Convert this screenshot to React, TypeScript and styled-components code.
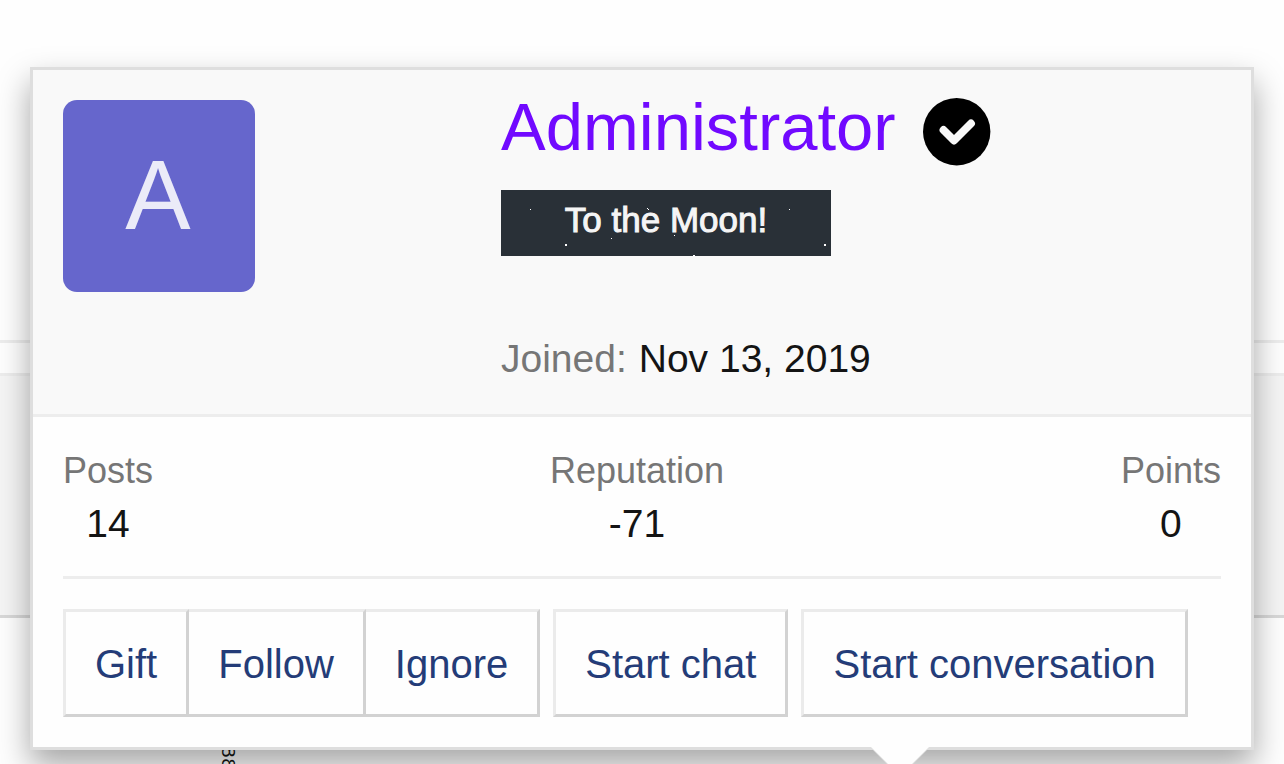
import React from "react";
import styled, { createGlobalStyle } from "styled-components";

const GlobalStyle = createGlobalStyle`
  *, *::before, *::after { box-sizing: border-box; }
  html, body { margin: 0; padding: 0; }
  body {
    font-family: "Liberation Sans", Arial, sans-serif;
    font-size: 40px;
    color: #141414;
    background: #fefefe;
  }
`;

const Page = styled.div`
  position: relative;
  height: 100vh;
  min-height: 764px;
  overflow: hidden;
`;

const ThreadIntro = styled.div`
  height: 343px;
  border-bottom: 3px solid #ededed;
`;

const ThreadPost = styled.div`
  margin-top: 30px;
  height: 245px;
  background: #f5f5f5;
  border-top: 3px solid #ededed;
  border-bottom: 3px solid #d8d8d8;
`;

const ThreadFooter = styled.div`
  padding: 128px 0 0 216px;
`;

const SideCount = styled.span`
  display: block;
  writing-mode: vertical-rl;
  font-family: "Liberation Mono", monospace;
  font-size: 20px;
  line-height: 22px;
`;

const MemberTooltip = styled.section`
  position: absolute;
  top: 67px;
  left: 30px;
  right: 30px;
  background: #fefefe;
  border: 3px solid #dedede;
  box-shadow: 0 15px 30px rgba(0, 0, 0, 0.35);
`;

const Header = styled.header`
  display: grid;
  grid-template-columns: minmax(192px, 438px) minmax(0, 1fr);
  padding: 30px;
  background: #f9f9f9;
  border-bottom: 3px solid #ededed;
`;

const Avatar = styled.a`
  display: flex;
  align-items: center;
  justify-content: center;
  width: 192px;
  height: 192px;
  padding: 0 2px 2px 0;
  border-radius: 14px;
  background: #6666cc;
  color: #ebebf8;
  font-size: 98px;
  line-height: 100px;
  text-decoration: none;
`;

const NameRow = styled.div`
  display: flex;
  align-items: flex-start;
  gap: 27px;
  height: 64px;
`;

const Name = styled.h1`
  margin: 0;
  font-size: 67px;
  line-height: 54px;
  font-weight: 400;

  a {
    color: #7109ff;
    text-decoration: none;
  }
`;

const VerifiedIcon = styled.svg`
  flex: none;
  align-self: center;
  width: 68px;
  height: 68px;
`;

const Banner = styled.div`
  position: relative;
  width: 330px;
  height: 66px;
  margin-top: 26px;
  background: #293037;
  color: #f5f5f5;
  font-size: 35px;
  line-height: 60px;
  text-align: center;
  -webkit-text-stroke: 1px #f5f5f5;
`;

const Stars = styled.svg`
  position: absolute;
  inset: 0;
`;

const Joined = styled.dl`
  display: flex;
  gap: 12px;
  margin: 78px 0 0;
  font-size: 39px;
  line-height: 50px;

  dt { color: #767676; }
  dd { margin: 0; }
`;

const Body = styled.div`
  padding: 30px;
`;

const Stats = styled.div`
  display: flex;
  justify-content: space-between;
  padding-bottom: 26px;
  border-bottom: 3px solid #ededed;
`;

const Stat = styled.dl`
  margin: 0;
  text-align: center;

  dt {
    color: #767676;
    font-size: 36px;
    line-height: 48px;
  }

  dd {
    margin: 3px 0 0;
    font-size: 39px;
    line-height: 52px;
  }
`;

const Actions = styled.div`
  display: flex;
  gap: 13px;
  margin-top: 30px;
`;

const ButtonGroup = styled.div`
  display: flex;
`;

const ActionButton = styled.button<{ $joined?: boolean }>`
  padding: 26px 29px 24px;
  border: 3px solid;
  border-color: #ebebeb #d2d2d2 #d2d2d2 #ebebeb;
  border-left-width: ${(p) => (p.$joined ? "0" : "3px")};
  border-radius: 0;
  background: #fefefe;
  color: #243c78;
  font: inherit;
  line-height: 52px;
  white-space: nowrap;
  cursor: pointer;
`;

const Pointer = styled.svg`
  position: absolute;
  top: 100%;
  left: 837px;
  width: 60px;
  height: 30px;
`;

const stars = [
  { x: 29, y: 19, size: 1 },
  { x: 146, y: 18, size: 1 },
  { x: 147, y: 19, size: 1 },
  { x: 288, y: 19, size: 1 },
  { x: 110, y: 48, size: 1 },
  { x: 173, y: 45, size: 1 },
  { x: 64, y: 54, size: 2 },
  { x: 323, y: 54, size: 2 },
  { x: 192, y: 65, size: 2 },
];

const stats = [
  { label: "Posts", value: "14" },
  { label: "Reputation", value: "-71" },
  { label: "Points", value: "0" },
];

export default function App() {
  return (
    <>
      <GlobalStyle />
      <Page>
        <ThreadIntro />
        <ThreadPost />
        <ThreadFooter>
          <SideCount>88</SideCount>
        </ThreadFooter>

        <MemberTooltip aria-label="Member">
          <Header>
            <div>
              <Avatar href="#profile">A</Avatar>
            </div>
            <div>
              <NameRow>
                <Name>
                  <a href="#profile">Administrator</a>
                </Name>
                <VerifiedIcon viewBox="0 0 68 68" role="img" aria-label="Verified">
                  <circle cx="33.7" cy="33.7" r="33.7" fill="#000" />
                  <path
                    d="M20.5 32 31 42.5 48 25.5"
                    fill="none"
                    stroke="#f9f9f9"
                    strokeWidth="7.8"
                    strokeLinecap="round"
                    strokeLinejoin="round"
                  />
                </VerifiedIcon>
              </NameRow>
              <Banner>
                <Stars width="330" height="66" aria-hidden="true">
                  {stars.map((s) => (
                    <rect key={`${s.x}-${s.y}`} x={s.x} y={s.y} width={s.size} height={s.size} fill="#fff" />
                  ))}
                </Stars>
                To the Moon!
              </Banner>
              <Joined>
                <dt>Joined:</dt>
                <dd>Nov 13, 2019</dd>
              </Joined>
            </div>
          </Header>

          <Body>
            <Stats>
              {stats.map((s) => (
                <Stat key={s.label}>
                  <dt>{s.label}</dt>
                  <dd>{s.value}</dd>
                </Stat>
              ))}
            </Stats>
            <Actions>
              <ButtonGroup>
                <ActionButton type="button">Gift</ActionButton>
                <ActionButton type="button" $joined>Follow</ActionButton>
                <ActionButton type="button" $joined>Ignore</ActionButton>
              </ButtonGroup>
              <ActionButton type="button">Start chat</ActionButton>
              <ActionButton type="button">Start conversation</ActionButton>
            </Actions>
          </Body>

          <Pointer viewBox="0 0 60 30" aria-hidden="true">
            <path d="M0 0H60L30 30Z" fill="#dedede" />
            <path d="M1 0H59L30 29Z" fill="#fefefe" />
          </Pointer>
        </MemberTooltip>
      </Page>
    </>
  );
}
